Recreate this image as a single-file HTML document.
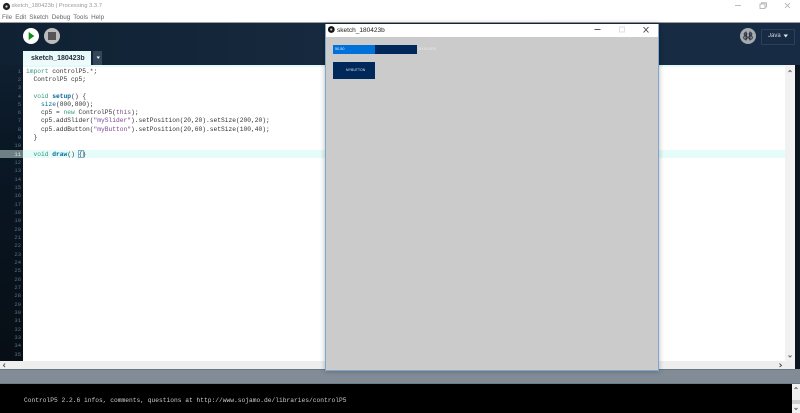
<!DOCTYPE html>
<html><head><meta charset="utf-8">
<style>
html,body{margin:0;padding:0;width:800px;height:413px;overflow:hidden;background:#fff;font-family:"Liberation Sans",sans-serif}
div,svg{position:absolute}
.t{white-space:pre;filter:blur(.35px)}
#code div{left:26px;white-space:pre;font:6.26px/8.33px "Liberation Mono",monospace;color:#333;height:8.33px}
#nums div{left:0;width:21px;text-align:right;font:5.5px/8.33px "Liberation Mono",monospace;color:#5f7284;height:8.33px}
b{font-weight:bold;color:#006699}
i{font-style:normal;color:#33997e}
u{text-decoration:none;color:#7d4793}
s{text-decoration:none;color:#006699}
</style></head><body>
<!-- title bar -->
<svg style="left:2px;top:2px" width="9" height="9" viewBox="0 0 9 9"><circle cx="4.5" cy="4.5" r="3.6" fill="#222"/><circle cx="4.5" cy="4.5" r="1.1" fill="#ddd"/></svg>
<div class="t" style="left:11.500px;top:2px;font-size:5.800px;line-height:9px;color:#999">sketch_180423b | Processing 3.3.7</div>
<div class="t" style="left:2px;top:13px;font-size:6.3px;line-height:9px;color:#666;word-spacing:1.4px">File Edit Sketch Debug Tools Help</div>
<svg style="left:730px;top:0" width="70" height="12" viewBox="0 0 70 12" fill="none" stroke="#aaa" stroke-width=".8"><path d="M5 5.500H11"/><rect x="30" y="4" width="5" height="4.500"/><path d="M31.500 4V2.800H36.500V7H35"/><path d="M55 3L60 8M60 3L55 8"/></svg>
<!-- header -->
<div style="left:0;top:22px;width:800px;height:1.500px;background:#9a9fa3"></div>
<div style="left:0;top:23px;width:800px;height:42px;background:linear-gradient(90deg,#0f2132 0,#16293e 40%,#172c44 100%)"></div>
<div style="left:23px;top:28px;width:16px;height:16px;border-radius:50%;background:#fff"></div>
<svg style="left:23px;top:28px" width="16" height="16"><path d="M5.700 4L11.300 8L5.700 12Z" fill="#0a8a12"/></svg>
<div style="left:44px;top:28px;width:16px;height:16px;border-radius:50%;background:#bcbcbc"></div>
<div style="left:48px;top:32px;width:8px;height:8px;background:#555"></div>
<div style="left:740px;top:28px;width:16px;height:16px;border-radius:50%;background:#a6aaae"></div>
<svg style="left:740px;top:28px" width="16" height="16" fill="none" stroke="#2a3340" stroke-width="1"><path d="M6 3.500V12.500M10 3.500V12.500"/><circle cx="5.500" cy="9.500" r="1.800"/><circle cx="10.500" cy="9.500" r="1.800"/><circle cx="5.500" cy="6" r="1.300"/><circle cx="10.500" cy="6" r="1.300"/></svg>
<div style="left:761px;top:29px;width:32px;height:14px;border:1px solid #2c4058;border-radius:1px;box-sizing:content-box"></div>
<div class="t" style="left:768px;top:32px;font-size:6px;line-height:9px;color:#cfd6dc">Java</div>
<svg style="left:783px;top:34px" width="6" height="5"><path d="M0.500 .5H5L2.750 3.500Z" fill="#e4e8ec"/></svg>
<!-- tab -->
<div style="left:23px;top:51px;width:68px;height:14px;background:linear-gradient(#e4f9f9,#f0fbfb)"></div>
<div class="t" style="left:31px;top:53.500px;font-size:7px;line-height:9px;font-weight:bold;color:#25303a">sketch_180423b</div>
<div style="left:93px;top:51px;width:9px;height:14px;background:#33465a"></div>
<svg style="left:95.500px;top:56px" width="5" height="4"><path d="M.5 .5H4L2.250 3Z" fill="#e8eef2"/></svg>
<!-- gutter -->
<div style="left:0;top:65px;width:23px;height:296px;background:linear-gradient(#0f1f30,#0a1826 25%,#070e15 100%)"></div>
<!-- editor -->
<div style="left:23px;top:65px;width:762px;height:296px;background:#fff"></div>
<div style="left:23px;top:65px;width:762px;height:1.500px;background:#e4f9f9"></div>
<div style="left:0;top:149.500px;width:23px;height:8.300px;background:#6f8085"></div>
<div style="left:23px;top:149.500px;width:762px;height:8.300px;background:#e6fcfa"></div>
<div id="nums" class="t" style="left:0;top:67.500px;width:23px;height:294px;overflow:hidden">
<div style="top:0">1</div><div style="top:8.330px">2</div><div style="top:16.660px">3</div><div style="top:25px">4</div><div style="top:33.320px">5</div><div style="top:41.650px">6</div><div style="top:49.980px">7</div><div style="top:58.310px">8</div><div style="top:66.640px">9</div><div style="top:74.970px">10</div><div style="top:83.300px;color:#dfe6e8">11</div><div style="top:91.630px">12</div><div style="top:99.960px">13</div><div style="top:108.290px">14</div><div style="top:116.620px">15</div><div style="top:124.950px">16</div><div style="top:133.280px">17</div><div style="top:141.610px">18</div><div style="top:149.940px">19</div><div style="top:158.270px">20</div><div style="top:166.600px">21</div><div style="top:174.930px">22</div><div style="top:183.260px">23</div><div style="top:191.590px">24</div><div style="top:199.920px">25</div><div style="top:208.250px">26</div><div style="top:216.580px">27</div><div style="top:224.910px">28</div><div style="top:233.240px">29</div><div style="top:241.570px">30</div><div style="top:249.900px">31</div><div style="top:258.230px">32</div><div style="top:266.560px">33</div><div style="top:274.890px">34</div><div style="top:283.220px">35</div>
</div>
<div id="code" class="t" style="left:0;top:67.500px;width:330px;height:100px">
<div style="top:0"><i>import</i> controlP5.*;</div>
<div style="top:8.330px">  ControlP5 cp5;</div>
<div style="top:25px">  <i>void</i> <b>setup</b>() {</div>
<div style="top:33.320px">    <s>size</s>(800,800);</div>
<div style="top:41.650px">    cp5 = <i>new</i> ControlP5(<u>this</u>);</div>
<div style="top:49.980px">    cp5.addSlider(<u>"mySlider"</u>).setPosition(20,20).setSize(200,20);</div>
<div style="top:58.310px">    cp5.addButton(<u>"myButton"</u>).setPosition(20,60).setSize(100,40);</div>
<div style="top:66.640px">  }</div>
<div style="top:83.300px">  <i>void</i> <b>draw</b>() {}</div>
</div>
<div style="left:78px;top:149.500px;width:6px;height:8px;border:1px solid #7fb0c8;box-sizing:border-box"></div>
<!-- scrollbars -->
<div style="left:785px;top:65px;width:10px;height:296px;background:#f1f1f1"></div>
<div style="left:23px;top:361px;width:772px;height:8px;background:#eeeeee"></div>
<div style="left:0;top:361px;width:23px;height:8px;background:#eeeeee"></div>
<div style="left:795px;top:65px;width:5px;height:304px;background:#0b1520"></div>
<svg style="left:785px;top:65px" width="10" height="304" fill="none" stroke="#666" stroke-width="1"><path d="M3.500 7L5 5.500L6.500 7"/><path d="M3.500 290.500L5 292L6.500 290.500"/></svg>
<svg style="left:0;top:361px" width="800" height="8" fill="none" stroke="#555" stroke-width="1"><path d="M5 2.500L3.500 4.500L5 6"/><path d="M779.500 2.500L781.500 4.500L779.500 6"/></svg>
<!-- status -->
<div style="left:0;top:369px;width:800px;height:15px;background:#818c96"></div>
<div style="left:0;top:369px;width:795px;height:1px;background:#6b7680"></div>
<div style="left:0;top:383px;width:800px;height:1px;background:#6f7a84"></div>
<!-- console -->
<div style="left:0;top:384px;width:800px;height:29px;background:#000"></div>
<div class="t" style="left:24px;top:396.500px;font:6.26px/8px 'Liberation Mono',monospace;color:#c8ccd0">ControlP5 2.2.6 infos, comments, questions at http://www.sojamo.de/libraries/controlP5</div>
<div style="left:792px;top:384px;width:8px;height:29px;background:#f1f1f1"></div>
<div style="left:792px;top:400px;width:8px;height:4px;background:#cdcdcd"></div>
<svg style="left:792px;top:384px" width="8" height="29" fill="none" stroke="#666" stroke-width="1"><path d="M2.500 5L4 3.500L5.500 5"/><path d="M2.500 24L4 25.500L5.500 24"/></svg>
<!-- sketch window -->
<div style="left:325px;top:24px;width:334px;height:347px;background:#cbcbcb;box-shadow:0 0 5px rgba(0,0,0,.3);border:1px solid #7ea9cf;border-top-color:#8aa6bf;box-sizing:border-box"></div>
<div style="left:326px;top:24px;width:332px;height:13px;background:#fff"></div>
<svg style="left:326.500px;top:25px" width="9" height="9"><circle cx="4.300" cy="4.500" r="3.400" fill="#111"/><circle cx="4.300" cy="4.500" r="1.100" fill="#ccc"/></svg>
<div class="t" style="left:337px;top:25.500px;font-size:6.500px;line-height:9px;color:#222">sketch_180423b</div>
<svg style="left:590px;top:24px" width="68" height="13" fill="none" stroke-width=".9"><path d="M4.500 5.500H10.500" stroke="#444"/><rect x="29.500" y="3" width="5" height="5" stroke="#ddd"/><path d="M53.500 3L58.500 8.500M58.500 3L53.500 8.500" stroke="#444"/></svg>
<!-- slider -->
<div style="left:333.300px;top:45px;width:83.700px;height:8.500px;background:#00285a"></div>
<div style="left:333.300px;top:45px;width:41.700px;height:8.500px;background:#0071d8"></div>
<div class="t" style="left:335px;top:46px;font-size:3.800px;line-height:6.500px;color:#e6f0fa">50.50</div>
<div class="t" style="left:418.500px;top:46px;font-size:3.300px;line-height:6.500px;color:#ececec;letter-spacing:.1px">MYSLIDER</div>
<div style="left:333.300px;top:62px;width:41.700px;height:16.500px;background:#00285a"></div>
<div class="t" style="left:346px;top:67px;font-size:3.300px;line-height:6.500px;color:#dfe6ee;letter-spacing:.1px">MYBUTTON</div>
</body></html>
